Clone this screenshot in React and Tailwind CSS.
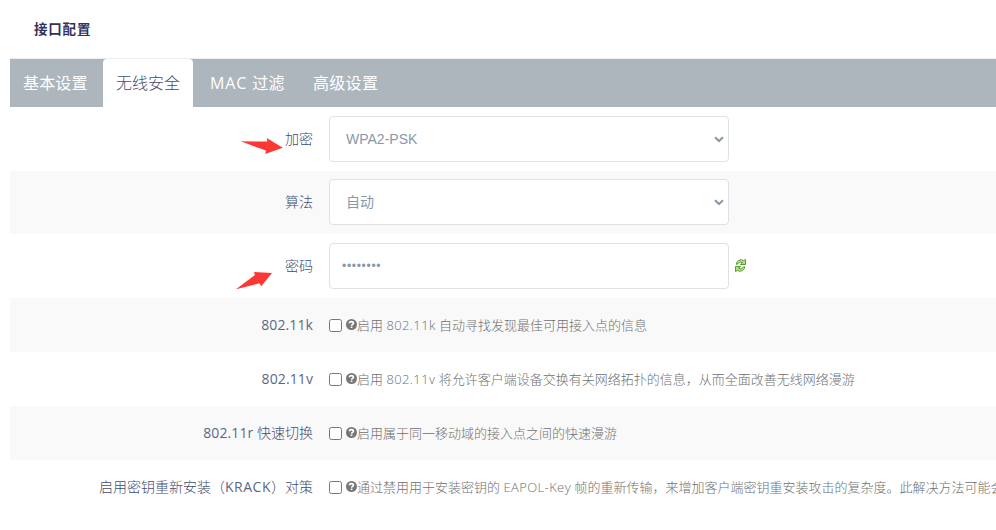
import React from "react";

const TABS = [
  { label: "基本设置", box: "w-[93px] pl-[13px] tracking-[0.15px]" },
  { label: "无线安全", box: "w-[90px] pl-[13px]", active: true },
  { label: <><En className="w-[38px] tracking-[0.9px]">MAC</En> 过滤</>, box: "w-[107px] pl-[17px] tracking-[0.15px]" },
  { label: "高级设置", box: "w-[92px] pl-[13px] tracking-[0.3px]" },
];

function En({ children, className = "" }) {
  return <span className={`inline-block whitespace-nowrap ${className}`}>{children}</span>;
}

function Row({ label, children, className = "h-[54px]", shaded }) {
  return (
    <div className={`flex items-center ${className} ${shaded ? "bg-[#f9f9f9]" : "bg-white"}`}>
      <div className="w-[303px] shrink-0 whitespace-nowrap pb-[2px] text-right text-[14px] font-light leading-[21px] text-[#3f4d70]">
        {label}
      </div>
      <div className="ml-[16px] flex items-center whitespace-nowrap">{children}</div>
    </div>
  );
}

const FIELD =
  "h-[46px] w-[400px] rounded-[4px] border border-[#dee2e6] bg-white px-3 font-['Liberation_Sans','Noto_Sans_CJK_SC',sans-serif] text-[#8898aa] outline-none";

function Select({ value }) {
  return (
    <div className="relative">
      <select className={`${FIELD} block appearance-none pl-[16px] text-[14px]`}>
        <option>{value}</option>
      </select>
      <svg className="pointer-events-none absolute right-[5px] top-[20px] h-[7px] w-[10px]" viewBox="0 0 10 7">
        <path d="M1 1.2L5 5L9 1.2" fill="none" stroke="#8898aa" strokeWidth="2" />
      </svg>
    </div>
  );
}

function Check({ children }) {
  return (
    <>
      <input type="checkbox" className="m-0 h-[13px] w-[13px]" />
      <svg className="mb-[1px] ml-[4px] h-[11px] w-[11px] shrink-0" viewBox="0 0 11 11">
        <circle cx="5.5" cy="5.5" r="5.5" fill="#777" />
        <path d="M3.4 4.3C3.5 2 7.5 2 7.4 4.2C7.4 5.4 5.6 5.3 5.6 6.7" fill="none" stroke="#fff" strokeWidth="1.7" />
        <rect x="4.7" y="7.5" width="1.7" height="1.5" fill="#fff" />
      </svg>
      <span className="pb-px text-[13px] font-light leading-[20px] text-[#707070]">{children}</span>
    </>
  );
}

function Refresh() {
  return (
    <svg className="mb-[2px] ml-[6px] h-[13px] w-[11px] shrink-0" viewBox="0 0 11 13" fill="#b5e08a" stroke="#4d9427" strokeWidth="0.9">
      <path d="M1.5 5.5V3.5L3.5 1.5L6.5 .6L8.5 1.6L10.5 .5V5.5H5.5L7.5 3.8L5.5 3.1L3.5 4.2Z" />
      <path d="M9.5 7.5V9.5L7.5 11.5L4.5 12.4L2.5 11.4L.5 12.5V7.5H5.5L3.5 9.2L5.5 9.9L7.5 8.8Z" />
    </svg>
  );
}

export default function App() {
  return (
    <div className="relative h-[530px] w-full overflow-hidden bg-white font-['Open_Sans','Noto_Sans_CJK_SC',sans-serif]">
      <h3 className="h-[58px] pl-[34px] pt-[18px] text-[13.5px] font-bold leading-[22px] tracking-[0.8px] text-[#32325d]">接口配置</h3>
      <div className="ml-[10px]">
        <nav className="flex h-[49px] border-t border-[#eceeef] bg-[#adb5bd] text-[16px] leading-[48px]">
          {TABS.map((t, i) => (
            <div
              key={i}
              className={`shrink-0 whitespace-nowrap ${t.box} ${t.active ? "rounded-t-[4px] bg-white font-light text-[#3f4d70]" : "text-white"}`}
            >
              {t.label}
            </div>
          ))}
        </nav>
        <Row label="加密" className="h-[64px]">
          <Select value="WPA2-PSK" />
        </Row>
        <Row label="算法" className="h-[63px] pb-[1px]" shaded>
          <Select value="自动" />
        </Row>
        <Row label="密码" className="h-[64px]">
          <input type="password" defaultValue="password" className={`${FIELD} text-[12px] tracking-[0.7px]`} />
          <Refresh />
        </Row>
        <Row label={<En className="font-normal tracking-[0.1px] text-[#5b6887]">802.11k</En>} shaded>
          <Check>启用 <En className="tracking-[0.4px]">802.11k</En> 自动寻找发现最佳可用接入点的信息</Check>
        </Row>
        <Row label={<En className="font-normal tracking-[0.1px] text-[#5b6887]">802.11v</En>}>
          <Check>启用 <En className="tracking-[0.4px]">802.11v</En> 将允许客户端设备交换有关网络拓扑的信息，从而全面改善无线网络漫游</Check>
        </Row>
        <Row label={<><En className="font-normal tracking-[0.1px] text-[#5b6887]">802.11r</En> 快速切换</>} shaded>
          <Check>启用属于同一移动域的接入点之间的快速漫游</Check>
        </Row>
        <Row label={<>启用密钥重新安装（<En className="font-normal tracking-[0.5px] text-[#5b6887]">KRACK</En>）对策</>}>
          <Check>通过禁用用于安装密钥的 <En className="tracking-[0.4px]">EAPOL-Key</En> 帧的重新传输，来增加客户端密钥重安装攻击的复杂度。此解决方法可能会</Check>
        </Row>
      </div>
      <svg className="pointer-events-none absolute left-[230px] top-[130px] h-[170px] w-[60px]" viewBox="230 130 60 170" fill="#fd3734">
        <path d="M240.7 141.2L267.4 141.6L266.7 138L282.8 147.8L265.3 154L266 150.6Z" />
        <path d="M236 289.2L254.9 275L254 272L272 273L261.3 286.2L259.3 283.3Z" />
      </svg>
    </div>
  );
}
